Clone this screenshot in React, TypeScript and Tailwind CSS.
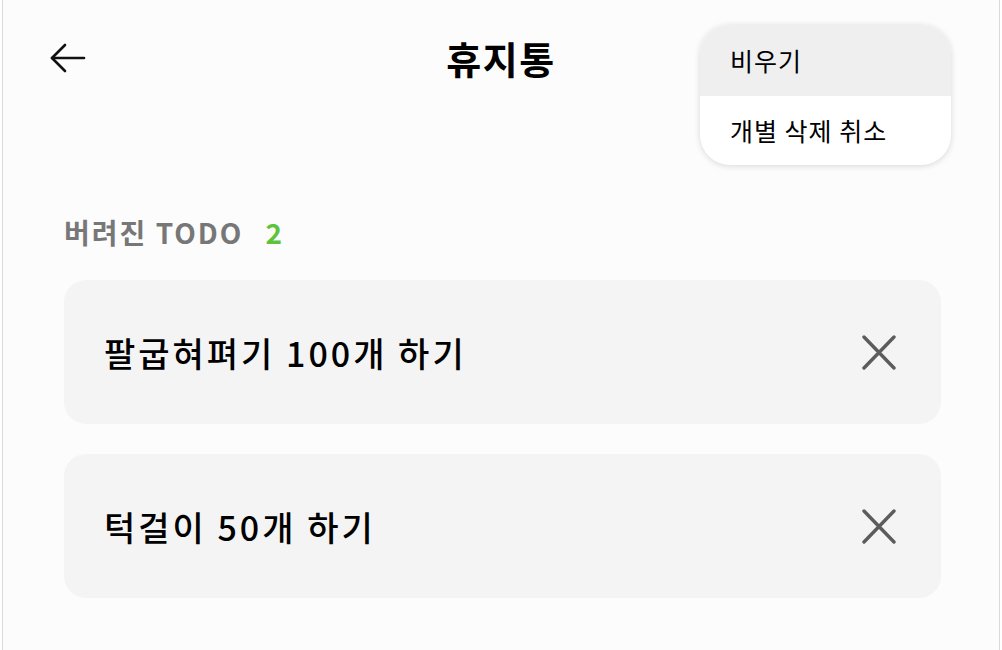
import React from 'react';

const todos = ['팔굽혀펴기 100개 하기', '턱걸이 50개 하기'];

function BackIcon() {
  return (
    <svg width="36" height="30" viewBox="0 0 36 30" fill="none" stroke="#111" strokeWidth={2.6} strokeLinecap="round" strokeLinejoin="round" aria-hidden="true">
      <path d="M34 15H2" />
      <path d="M15 2L2 15l13 13" />
    </svg>
  );
}

function CloseIcon() {
  return (
    <svg width="34" height="35" viewBox="0 0 34 35" fill="none" stroke="#5c5c5c" strokeWidth={3.4} strokeLinecap="round" aria-hidden="true">
      <path d="M2 2l30 31M32 2L2 33" />
    </svg>
  );
}

export default function App() {
  return (
    <div
      className="mx-auto w-[998px] min-h-screen border-x border-[#dadada] bg-[#fcfcfc] text-black"
      style={{ fontFamily: '"Noto Sans CJK KR", "Noto Sans", sans-serif' }}
    >
      {/* Header */}
      <header className="relative h-[116px] flex items-center pl-[47px]">
        <button className="flex items-center">
          <BackIcon />
        </button>
        <h1 className="absolute left-0 right-0 text-center text-[38px] tracking-[1.5px] font-bold leading-none pointer-events-none">
          휴지통
        </h1>

        {/* Menu */}
        <div className="absolute top-[25px] right-[48px] w-[251px] rounded-[30px] overflow-hidden bg-white shadow-[0_1px_6px_rgba(0,0,0,0.15)]">
          <div className="h-[71px] flex items-center pl-[30px] bg-[#efefef] text-[25px] tracking-[1px]">비우기</div>
          <div className="h-[69px] flex items-center pl-[30px] text-[25px] tracking-[1px]">개별 삭제 취소</div>
        </div>
      </header>

      {/* List */}
      <section className="pl-[61px] pr-[58px] pt-[97px]">
        <div className="flex items-center gap-[22px] text-[28px] tracking-[2px] font-bold leading-[39px]">
          <span className="text-[#777]">버려진 TODO</span>
          <span className="text-[#5cc43c]">2</span>
        </div>

        <div className="mt-[28px] flex flex-col gap-[30px]">
          {todos.map((t) => (
            <div key={t} className="h-[144px] rounded-[22px] bg-[#f4f4f4] flex items-center justify-between pl-[40px] pr-[45px]">
              <span className="text-[34px] tracking-[3px] font-medium">{t}</span>
              <button>
                <CloseIcon />
              </button>
            </div>
          ))}
        </div>
      </section>
    </div>
  );
}
